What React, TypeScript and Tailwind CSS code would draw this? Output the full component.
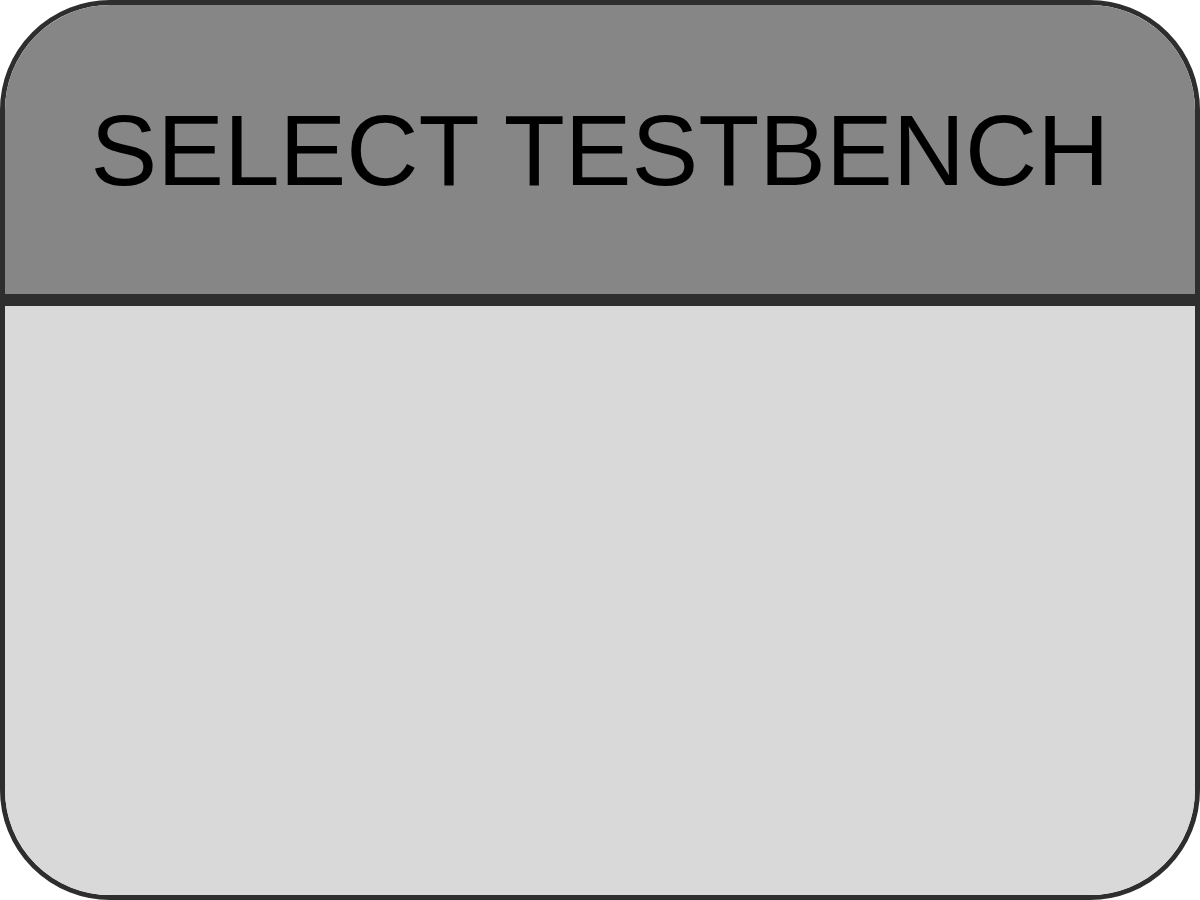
export default function App() {
  return (
    <div className="w-[1200px] h-[900px] bg-white">
      <div className="w-full h-full flex flex-col rounded-[110px] border-[5px] border-[#2e2e2e] overflow-hidden">
        {/* Header */}
        <div className="h-[301px] shrink-0 bg-[#868686] flex justify-center pt-[95px] border-b-[12px] border-[#2e2e2e]">
          <h1
            className="text-[100px] leading-none text-black whitespace-nowrap"
            style={{ fontFamily: '"Liberation Sans", Arial, sans-serif' }}
          >
            SELECT TESTBENCH
          </h1>
        </div>
        {/* Body */}
        <div className="flex-1 bg-[#d9d9d9]" />
      </div>
    </div>
  );
}
